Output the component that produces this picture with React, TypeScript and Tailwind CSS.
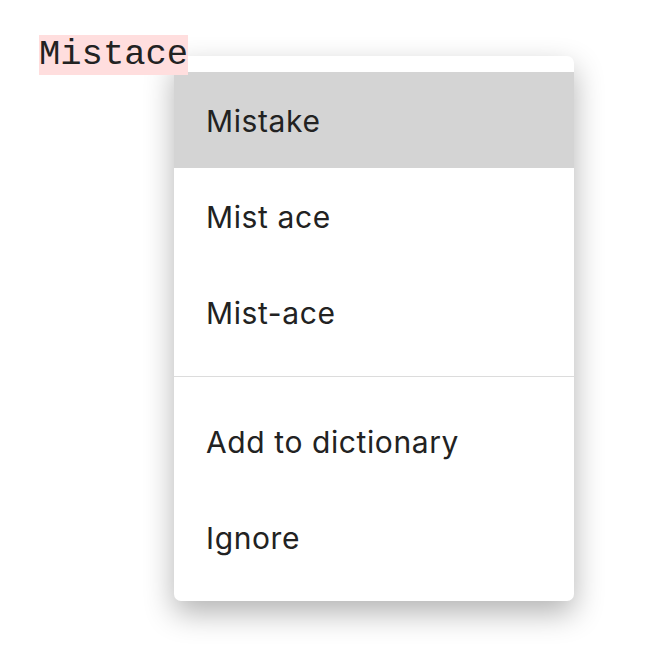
import React from 'react';

const suggestions = ['Mistake', 'Mist ace', 'Mist-ace'];
const actions = ['Add to dictionary', 'Ignore'];

export default function App() {
  return (
    <div className="min-h-[658px] w-[648px] bg-white pl-[39px] pt-[35px]">
      <span className="inline-block bg-[#ffdede] font-['Liberation_Mono',monospace] text-[35.5px] leading-[40px] text-[#222]">
        Mistace
      </span>

      {/* Spelling menu */}
      <div className="-mt-[19px] ml-[135px] w-[400px] rounded-[7px] bg-white py-4 font-['Inter',sans-serif] text-[30px] tracking-[0.02em] text-[#222] shadow-[0_12px_30px_rgba(0,0,0,0.3)]">
        {suggestions.map((s, i) => (
          <div
            key={s}
            className={`flex h-24 items-center px-8 pt-[2px] ${i === 0 ? 'bg-[#d4d4d4]' : ''}`}
          >
            {s}
          </div>
        ))}
        <div className="my-4 h-px bg-[#dcdcdc]" />
        {actions.map((a) => (
          <div key={a} className="flex h-24 items-center px-8 pt-[2px]">
            {a}
          </div>
        ))}
      </div>
    </div>
  );
}
